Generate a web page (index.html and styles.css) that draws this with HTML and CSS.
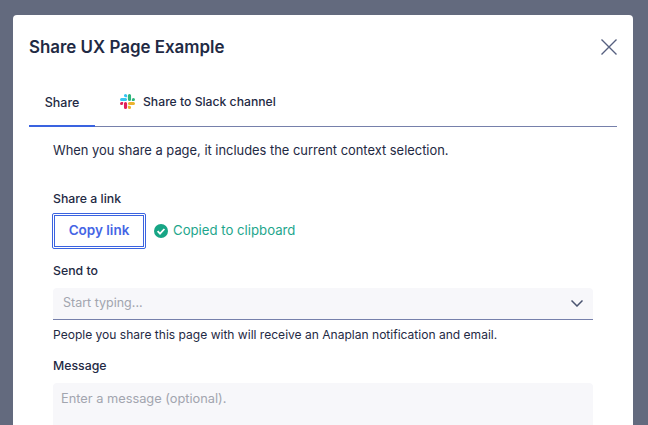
FILE: index.html
```html
<!DOCTYPE html>
<html lang="en">
<head>
<meta charset="utf-8">
<title>Share UX Page Example</title>
<link rel="stylesheet" href="styles.css">
</head>
<body>
<div class="modal">
  <header class="modal-head">
    <h1 class="title">Share UX Page Example</h1>
    <button class="close" aria-label="Close">
      <svg width="16" height="16" viewBox="0 0 16 16"><path d="M0.5 0.5l15 15M15.5 0.5l-15 15" fill="none" stroke="#56607f" stroke-width="1.4"/></svg>
    </button>
  </header>
  <nav class="tabs">
    <div class="tab active">Share</div>
    <div class="tab slack">
      <svg class="slack-icon" width="15" height="15" viewBox="0 0 122.8 122.8">
        <path fill="#e01e5a" d="M25.8 77.6a12.9 12.9 0 1 1-12.9-12.9h12.9zM32.3 77.6a12.9 12.9 0 0 1 25.8 0v32.3a12.9 12.9 0 0 1-25.8 0z"/>
        <path fill="#36c5f0" d="M45.2 25.8a12.9 12.9 0 1 1 12.9-12.9v12.9zM45.2 32.3a12.9 12.9 0 0 1 0 25.8H12.9a12.9 12.9 0 0 1 0-25.8z"/>
        <path fill="#2eb67d" d="M97 45.2a12.9 12.9 0 1 1 12.9 12.9H97zM90.5 45.2a12.9 12.9 0 0 1-25.8 0V12.9a12.9 12.9 0 0 1 25.8 0z"/>
        <path fill="#ecb22e" d="M77.6 97a12.9 12.9 0 1 1-12.9 12.9V97zM77.6 90.5a12.9 12.9 0 0 1 0-25.8h32.3a12.9 12.9 0 0 1 0 25.8z"/>
      </svg>
      <span>Share to Slack channel</span>
    </div>
  </nav>
  <main class="content">
    <p class="intro">When you share a page, it includes the current context selection.</p>
    <div class="label link-label">Share a link</div>
    <div class="copy-row">
      <button class="copy">Copy link</button>
      <svg class="check" width="14" height="14" viewBox="0 0 14 14"><circle cx="7" cy="7" r="7" fill="#17a585"/><path d="M3.6 7.2l2.4 2.4 4.4-4.6" fill="none" stroke="#fff" stroke-width="1.8"/></svg>
      <span class="copied">Copied to clipboard</span>
    </div>
    <div class="label send-label">Send to</div>
    <div class="select">
      <span class="placeholder">Start typing...</span>
      <svg class="chevron" width="12" height="7" viewBox="0 0 12 7"><path d="M0.5 0.5l5.5 5.5 5.5-5.5" fill="none" stroke="#4a5470" stroke-width="1.5"/></svg>
    </div>
    <p class="hint">People you share this page with will receive an Anaplan notification and email.</p>
    <div class="label message-label">Message</div>
    <div class="textarea"><span class="placeholder message-placeholder">Enter a message (optional).</span></div>
  </main>
</div>
</body>
</html>
```
FILE: styles.css
```css
html, body { margin: 0; height: 100%; overflow: hidden; }
body {
  background: #636a7e;
  font-family: Inter, "Liberation Sans", sans-serif;
  color: #1f2a44;
  padding: 15px 15px 0 13px;
  box-sizing: border-box;
}
.modal {
  background: #fff;
  border-radius: 4px 4px 0 0;
  height: 410px;
  overflow: hidden;
}
.modal-head {
  display: flex;
  justify-content: space-between;
  align-items: center;
  padding: 21px 16px 0;
  height: 22px;
}
.title { margin: 0; font-size: 16.9px; font-weight: 600; line-height: 22px; }
.close { border: 0; background: none; padding: 0; display: flex; }
.tabs {
  display: flex;
  margin: 29px 16px 0;
  height: 39px;
  border-bottom: 1px solid #7680ab;
  font-size: 12.5px;
  font-weight: 500;
}
.tab { padding: 0 16px 8px; display: flex; align-items: center; }
.tab.active { width: 34px; margin-bottom: -1px; border-bottom: 2px solid #3a63e0; justify-content: center; height: 30px; }
.tab.slack { padding: 0 0 10px 25px; gap: 8px; font-size: 12.2px; }
.content { padding: 0 40px; }
.intro { margin: 15px 0 0; font-size: 12.9px; line-height: 18px; }
.label { font-size: 12.3px; font-weight: 500; line-height: 16px; }
.link-label { margin-top: 31px; }
.copy-row { display: flex; align-items: center; margin-top: 6px; }
.copy {
  width: 94px; height: 36px;
  margin-left: -1px;
  box-sizing: border-box;
  background: #fff;
  border: 1px solid #3a63e0;
  outline: 1px solid #3a63e0;
  outline-offset: -3px;
  border-radius: 2px;
  color: #4565e5;
  font: 600 13.5px Inter, sans-serif;
  padding: 0 0 2px;
}
.check { margin-left: 8px; }
.copied { margin-left: 5px; color: #1ea68c; font-size: 13.2px; padding-bottom: 2px; }
.send-label { margin-top: 14px; }
.select {
  margin-top: 9px;
  height: 31px;
  background: #f7f7fa;
  border-bottom: 1px solid #7680ab;
  border-radius: 4px 4px 0 0;
  display: flex;
  align-items: center;
  justify-content: space-between;
  padding: 0 10px 0 10px;
}
.placeholder { color: #a2a5af; font-size: 12.5px; padding-bottom: 3px; }
.hint { margin: 7px 0 0; font-size: 12.05px; line-height: 16px; }
.message-label { margin-top: 15px; }
.textarea {
  margin-top: 9px;
  height: 100px;
  background: #f7f7fa;
  border-radius: 4px;
  padding: 8px 8px;
}
.message-placeholder { font-size: 12.8px; padding: 0; line-height: 16px; display: block; }
```
